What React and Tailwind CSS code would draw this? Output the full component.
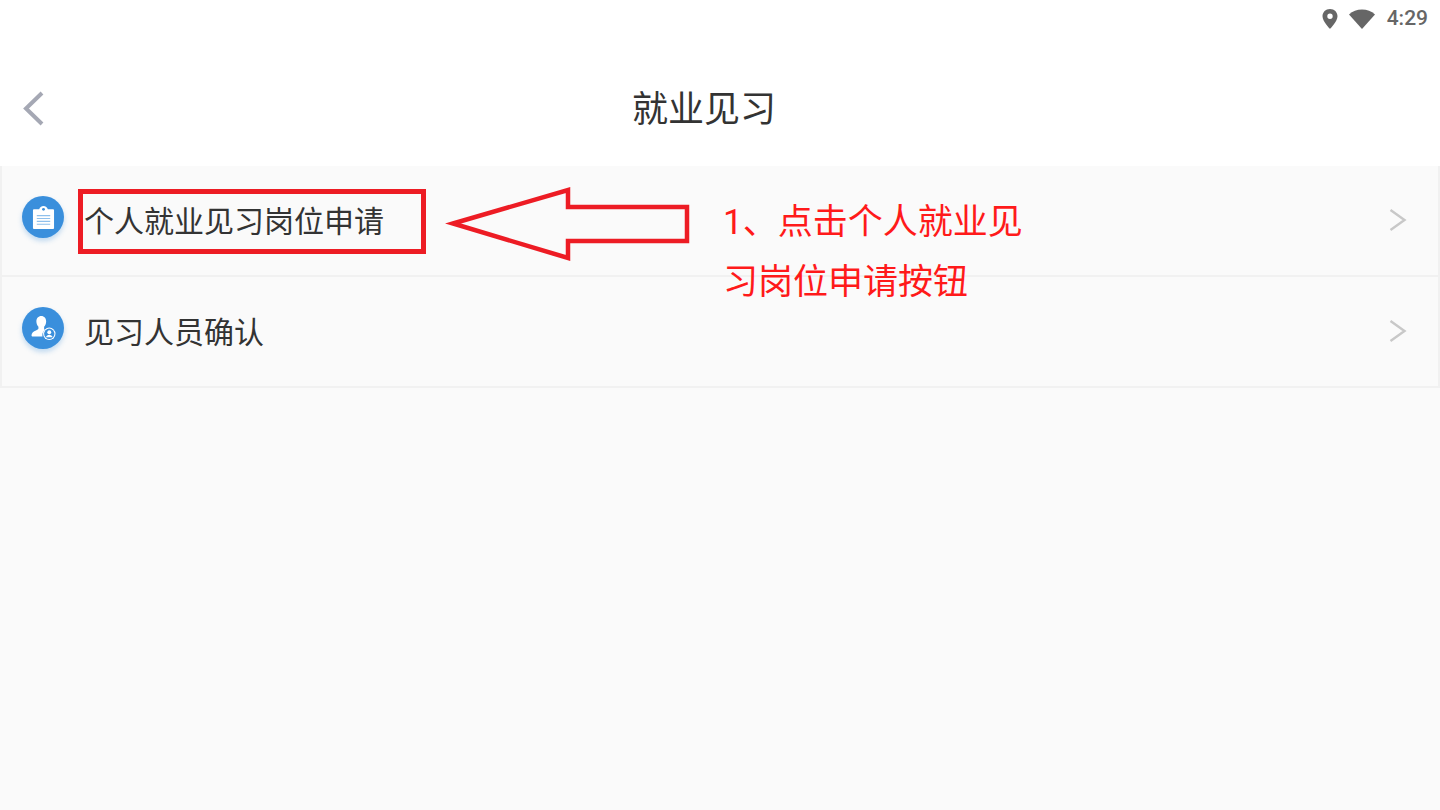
const FONT = "font-['Roboto','Noto_Sans_CJK_SC',sans-serif]";

function ClipboardIcon() {
    return (
        <svg width="23" height="25" viewBox="0 0 24 26">
            <path d="M2 4.500h5.500C8 2.500 9.800 1 12 1s4 1.500 4.500 3.500H22a1 1 0 0 1 1 1V24a1 1 0 0 1-1 1H2a1 1 0 0 1-1-1V5.500a1 1 0 0 1 1-1z" fill="#fff" />
            <circle cx="12" cy="4.500" r="1.500" fill="#3a8fdc" />
            <path d="M5 11h14M5 14h14M5 17h14M5 20h14" stroke="#8fc0ec" strokeWidth="1.200" />
        </svg>
    );
}

function PersonIcon() {
    return (
        <svg width="25" height="24" viewBox="0 0 27 27">
            <path d="M11 0c3.300 0 5.500 2.600 5.500 6.200 0 2.400-1 4.400-2.300 5.800v2.400c0 .6.300 1 .8 1.300-1.700 1.300-2.800 3.300-2.800 5.600 0 .6 0 1.200.2 1.700H1.500c-1 0-1.500-.5-1.500-1.400 0-2.700 2.400-4.300 5-5.400 1.500-.6 2.800-1.200 2.800-2.200V12C6.500 10.600 5.500 8.600 5.500 6.200 5.500 2.600 7.700 0 11 0z" fill="#fff" />
            <circle cx="20" cy="20" r="7" fill="#fff" />
            <circle cx="20" cy="20" r="5.800" fill="#3a8fdc" />
            <circle cx="20" cy="18.300" r="2.200" fill="#fff" />
            <path d="M16.200 24c.5-2 2.200-3 3.800-3s3.300 1 3.800 3z" fill="#fff" />
        </svg>
    );
}

function ListRow({ icon, label }) {
    return (
        <div className="h-[111px] flex items-start border-b-2 border-[#f1f1f1] pl-[20px] pr-[31px]">
            <div className="mt-[30px] w-[42px] h-[42px] rounded-full bg-[#3a8fdc] flex items-center justify-center shadow-[0_3px_5px_rgba(58,143,220,0.3)]">
                {icon}
            </div>
            <span className="mt-[36px] ml-[20px] text-[30px] leading-[40px] text-[#333333]">{label}</span>
            <svg className="ml-auto mt-[42px]" width="18" height="24" viewBox="0 0 18 24" fill="none">
                <path d="M1.500 2L15.500 12L1.500 22" stroke="#c8c8c8" strokeWidth="2.400" />
            </svg>
        </div>
    );
}

export default function App() {
    return (
        <div className={`relative w-[1440px] h-[810px] overflow-hidden bg-[#fafafa] ${FONT}`}>
            <div className="h-[166px] bg-white flex flex-col">
                <div className="h-[38px] flex items-center justify-end gap-[8px] pr-[12px]">
                    <svg width="16" height="20" viewBox="0 0 16 20">
                        <path d="M8 0C3.600 0 .5 3.200.5 7.300.5 12.500 8 20 8 20s7.500-7.500 7.500-12.700C15.500 3.200 12.400 0 8 0zm0 10a2.700 2.700 0 1 1 0-5.400A2.700 2.700 0 0 1 8 10z" fill="#666666" />
                    </svg>
                    <svg width="28" height="20" viewBox="0 0 28 20" className="ml-[2px]">
                        <path d="M14 20L1 5.500C4.500 2.200 9 .5 14 .5s9.500 1.700 13 5z" fill="#666666" />
                    </svg>
                    <span className="ml-[3px] text-[21px] font-medium text-[#666666] font-['Roboto',sans-serif]">4:29</span>
                </div>
                <div className="relative flex-1 flex items-start justify-center pt-[48px] pr-[32px]">
                    <svg className="absolute left-[22px] top-[53px]" width="24" height="36" viewBox="0 0 24 36" fill="none">
                        <path d="M20 2L4 17.500L20 33" stroke="#a5a8b4" strokeWidth="4" />
                    </svg>
                    <h1 className="text-[36px] leading-[48px] font-normal text-[#333333]">就业见习</h1>
                </div>
            </div>

            <div className="border-x-2 border-[#f1f1f1]">
                <ListRow icon={<ClipboardIcon />} label="个人就业见习岗位申请" />
                <ListRow icon={<PersonIcon />} label="见习人员确认" />
            </div>

            {/* annotations drawn over the screenshot */}
            <div className="absolute left-[78px] top-[189px] w-[348px] h-[65px] border-[5px] border-[#ed1c24]" />
            <svg className="absolute left-0 top-0" width="1440" height="810" fill="none">
                <path d="M453 223.500L568 190V207H687V241H568V258Z" stroke="#ed1c24" strokeWidth="4.500" />
            </svg>
            <div className="absolute left-[723px] top-[193px] text-[35px] leading-[60px] text-[#ff1a1a] w-[320px]">
                <p>1、点击个人就业见</p>
                <p>习岗位申请按钮</p>
            </div>
        </div>
    );
}
